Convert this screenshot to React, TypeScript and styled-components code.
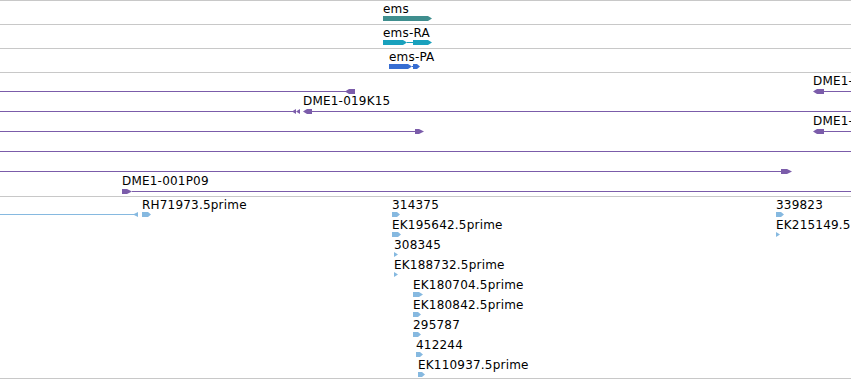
import React from 'react';
import styled, { createGlobalStyle } from 'styled-components';

type Part = ['box' | 'line' | 'tipR' | 'tipL', number, number];

interface FeatureData {
  x: number;
  row: number;
  label?: string;
  parts: Part[];
}

interface TrackData {
  id: string;
  height: number;
  color: string;
  gap: number;
  features: FeatureData[];
}

const GlobalStyle = createGlobalStyle`
  html, body { margin: 0; padding: 0; background: #ffffff; }
  body { font-family: "DejaVu Sans", "Liberation Sans", sans-serif; }
`;

const Browser = styled.div`
  width: 851px;
  height: 380px;
  overflow: hidden;
  display: flex;
  flex-direction: column;
  border-top: 1px solid #c8c8c8;
  box-sizing: border-box;
  background: #ffffff;
`;

const Track = styled.div<{ $h: number }>`
  position: relative;
  flex: 0 0 auto;
  height: ${(p) => p.$h}px;
  border-bottom: 1px solid #c8c8c8;
  overflow: hidden;
`;

const Feature = styled.div.attrs<{ $x: number; $row: number }>((p) => ({
  style: { left: p.$x, top: 1 + p.$row * 20 },
}))<{ $x: number; $row: number }>`
  position: absolute;
  display: flex;
  flex-direction: column;
  align-items: flex-start;
`;

const Label = styled.div`
  height: 14px;
  font: 12px/14px "DejaVu Sans", "Liberation Sans", sans-serif;
  letter-spacing: 0.2px;
  color: #000000;
  white-space: nowrap;
`;

const Glyph = styled.svg<{ $gap: number }>`
  display: block;
  margin-top: ${(p) => p.$gap}px;
  overflow: visible;
`;

const H = 5;

function renderPart(part: Part, color: string, key: number) {
  const [kind, a, b] = part;
  switch (kind) {
    case 'box':
      return <rect key={key} x={a} y={0} width={b - a} height={H} fill={color} shapeRendering="crispEdges" />;
    case 'line':
      return <rect key={key} x={a} y={2} width={b - a} height={1} fill={color} shapeRendering="crispEdges" />;
    case 'tipR':
      return <polygon key={key} points={`${a},0 ${b},${H / 2} ${a},${H}`} fill={color} />;
    case 'tipL':
      return <polygon key={key} points={`${b},0 ${a},${H / 2} ${b},${H}`} fill={color} />;
    default:
      return null;
  }
}

const END = 900;

const tracks: TrackData[] = [
  {
    id: 'gene',
    height: 23,
    color: '#3f8e8e',
    gap: 0,
    features: [
      { x: 383, row: 0, label: 'ems', parts: [['box', 0, 45], ['tipR', 45, 49]] },
    ],
  },
  {
    id: 'ra',
    height: 23,
    color: '#19a1bd',
    gap: 0,
    features: [
      {
        x: 383,
        row: 0,
        label: 'ems-RA',
        parts: [['box', 0, 20], ['tipR', 20, 24], ['line', 24, 30], ['box', 30, 45], ['tipR', 45, 49]],
      },
    ],
  },
  {
    id: 'pa',
    height: 23,
    color: '#376ed2',
    gap: 0,
    features: [
      {
        x: 389,
        row: 0,
        label: 'ems-PA',
        parts: [['box', 0, 19], ['tipR', 19, 23], ['line', 23, 24], ['box', 24, 28], ['tipR', 28, 31]],
      },
    ],
  },
  {
    id: 'bac',
    height: 123,
    color: '#7b5caa',
    gap: 1,
    features: [
      { x: 0, row: 0, parts: [['line', 0, 346], ['tipL', 345, 349], ['box', 349, 355]] },
      { x: 813, row: 0, label: 'DME1-108F06', parts: [['tipL', 0, 4], ['box', 4, 11], ['line', 11, END - 813]] },
      { x: 0, row: 1, parts: [['line', 0, 293], ['tipL', 292, 296], ['tipL', 296, 300]] },
      { x: 303, row: 1, label: 'DME1-019K15', parts: [['tipL', 0, 4], ['box', 4, 9], ['line', 9, END - 303]] },
      { x: 0, row: 2, parts: [['line', 0, 415], ['box', 415, 419], ['tipR', 419, 424]] },
      { x: 813, row: 2, label: 'DME1-127L22', parts: [['tipL', 0, 4], ['box', 4, 11], ['line', 11, END - 813]] },
      { x: 0, row: 3, parts: [['line', 0, END]] },
      { x: 0, row: 4, parts: [['line', 0, 781], ['box', 781, 787], ['tipR', 787, 792]] },
      { x: 122, row: 5, label: 'DME1-001P09', parts: [['box', 0, 5], ['tipR', 5, 10], ['line', 10, END - 122]] },
    ],
  },
  {
    id: 'est',
    height: 181,
    color: '#86b9e0',
    gap: 0,
    features: [
      { x: 0, row: 0, parts: [['line', 0, 134], ['tipL', 133, 138]] },
      { x: 142, row: 0, label: 'RH71973.5prime', parts: [['box', 0, 6], ['tipR', 6, 9]] },
      { x: 392, row: 0, label: '314375', parts: [['box', 0, 5], ['tipR', 5, 8]] },
      { x: 776, row: 0, label: '339823', parts: [['box', 0, 5], ['tipR', 5, 8]] },
      { x: 392, row: 1, label: 'EK195642.5prime', parts: [['box', 0, 6], ['tipR', 6, 9]] },
      { x: 776, row: 1, label: 'EK215149.5prime', parts: [['tipR', 0, 4]] },
      { x: 394, row: 2, label: '308345', parts: [['tipR', 0, 4]] },
      { x: 394, row: 3, label: 'EK188732.5prime', parts: [['tipR', 0, 4]] },
      { x: 413, row: 4, label: 'EK180704.5prime', parts: [['box', 0, 6], ['tipR', 6, 10]] },
      { x: 413, row: 5, label: 'EK180842.5prime', parts: [['box', 0, 5], ['tipR', 5, 8]] },
      { x: 413, row: 6, label: '295787', parts: [['box', 0, 5], ['tipR', 5, 8]] },
      { x: 416, row: 7, label: '412244', parts: [['box', 0, 4], ['tipR', 4, 7]] },
      { x: 418, row: 8, label: 'EK110937.5prime', parts: [['box', 0, 4], ['tipR', 4, 7]] },
    ],
  },
];

export default function App() {
  return (
    <>
      <GlobalStyle />
      <Browser>
        {tracks.map((t) => (
          <Track key={t.id} $h={t.height}>
            {t.features.map((f, i) => {
              const w = Math.max(...f.parts.map((p) => p[2]));
              return (
                <Feature key={i} $x={f.x} $row={f.row}>
                  <Label>{f.label ?? ''}</Label>
                  <Glyph $gap={t.gap} width={w} height={H} viewBox={`0 0 ${w} ${H}`}>
                    {f.parts.map((p, j) => renderPart(p, t.color, j))}
                  </Glyph>
                </Feature>
              );
            })}
          </Track>
        ))}
      </Browser>
    </>
  );
}
